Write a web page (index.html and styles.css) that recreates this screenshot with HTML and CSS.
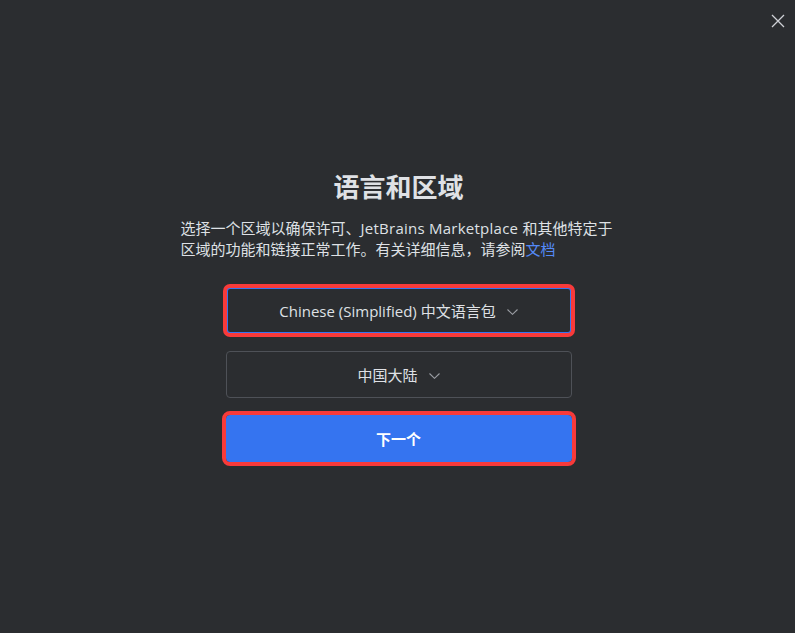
FILE: index.html
```html
<!DOCTYPE html>
<html lang="zh-CN">
<head>
<meta charset="utf-8">
<title>语言和区域</title>
<link rel="stylesheet" href="styles.css">
</head>
<body>
<main class="dialog">
  <header class="titlebar">
    <button class="close" aria-label="关闭">
      <svg width="14" height="14" viewBox="0 0 14 14"><path d="M1 1 L13 13 M13 1 L1 13" stroke="#cfd1d6" stroke-width="1.3" fill="none"/></svg>
    </button>
  </header>
  <section class="content">
    <h1 class="title">语言和区域</h1>
    <p class="desc">选择一个区域以确保许可、<span class="latin">JetBrains Marketplace </span>和其他特定于<br>区域的功能和链接正常工作。有关详细信息，请参阅<a class="link" href="#">文档</a></p>
    <div class="controls">
      <div class="select focused annotated">
        <span>Chinese (Simplified) 中文语言包</span>
        <svg class="chev" width="11" height="6" viewBox="0 0 11 6"><path d="M0.5 0.5 L5.5 5.3 L10.5 0.5" stroke="#9a9da3" stroke-width="1.1" fill="none"/></svg>
      </div>
      <div class="select">
        <span>中国大陆</span>
        <svg class="chev" width="11" height="6" viewBox="0 0 11 6"><path d="M0.5 0.5 L5.5 5.3 L10.5 0.5" stroke="#9a9da3" stroke-width="1.1" fill="none"/></svg>
      </div>
      <button class="primary annotated">下一个</button>
    </div>
  </section>
</main>
</body>
</html>
```

FILE: styles.css
```css
html, body {
  margin: 0;
  padding: 0;
  background: #2b2d30;
}
body {
  width: 795px;
  height: 633px;
  overflow: hidden;
  font-family: "Open Sans", "Noto Sans CJK SC", sans-serif;
  color: #dfe1e5;
}
.dialog {
  display: flex;
  flex-direction: column;
  height: 633px;
}
.titlebar {
  display: flex;
  justify-content: flex-end;
  height: 42px;
  padding-right: 10px;
}
.close {
  width: 14px;
  height: 14px;
  margin-top: 14px;
  padding: 0;
  border: 0;
  background: none;
  display: flex;
}
.content {
  display: flex;
  flex-direction: column;
  align-items: center;
  padding-top: 127px;
  padding-left: 2px;
}
.title {
  margin: 0;
  font-family: "Noto Sans CJK SC", sans-serif;
  font-size: 26px;
  line-height: 34px;
  font-weight: 700;
  color: #dfe1e5;
}
.desc {
  margin: 15px 0 0 0;
  width: 436px;
  font-size: 15px;
  line-height: 21px;
  white-space: nowrap;
  color: #dfe1e5;
}
.latin {
  letter-spacing: 0.25px;
}
.link {
  color: #548af7;
  text-decoration: none;
}
.controls {
  margin-top: 27px;
  display: flex;
  flex-direction: column;
  gap: 17px;
}
.select {
  box-sizing: border-box;
  width: 346px;
  height: 47px;
  padding-top: 2px;
  border: 1px solid #4e5157;
  border-radius: 4px;
  display: flex;
  align-items: center;
  justify-content: center;
  gap: 11px;
  font-size: 15px;
  line-height: 21px;
  color: #dfe1e5;
  background: #2b2d30;
}
.select.focused {
  border: 2px solid #3574f0;
  outline-offset: -1px;
}
.chev {
  margin-top: 1px;
}
.primary {
  box-sizing: border-box;
  width: 346px;
  height: 47px;
  border: 0;
  border-radius: 4px;
  background: #3574f0;
  color: #ffffff;
  font-family: "Noto Sans CJK SC", sans-serif;
  font-size: 15px;
  font-weight: 700;
}
.annotated {
  outline: 4px solid #f83a3a;
  outline-offset: 0;
}
```
